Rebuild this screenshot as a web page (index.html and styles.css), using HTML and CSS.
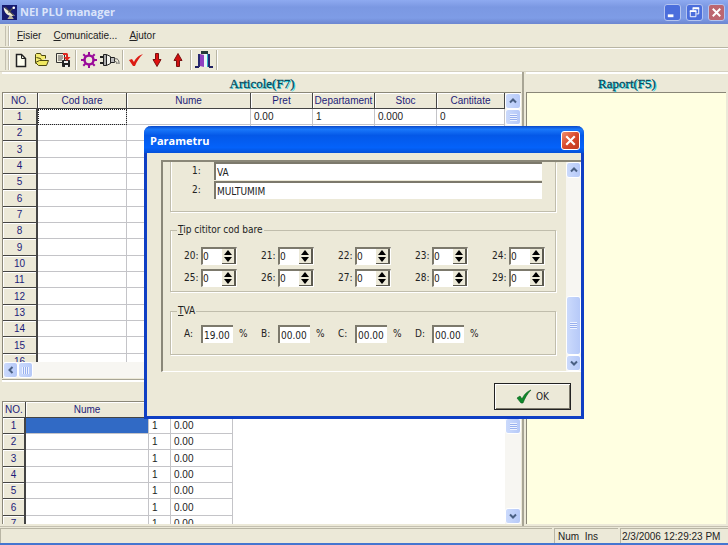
FILE: index.html
```html
<!DOCTYPE html>
<html lang="ro">
<head>
<meta charset="utf-8">
<title>NEI PLU manager</title>
<link rel="stylesheet" href="styles.css">
</head>
<body>
<div class="window">
  <header class="titlebar">
    <svg class="app-icon" viewBox="0 0 14 14" aria-hidden="true">
      <rect width="14" height="14" fill="#161a70"/>
      <path d="M1.500 2C2 8 6 11 12 10Z" fill="#f0ecd8"/>
      <path d="M3 2l8 8M6 7l5-5" stroke="#55534a" fill="none"/>
      <path d="M7 10l-2 3h6l-2-3" fill="#b8b49c"/>
      <circle cx="11" cy="2.500" r="1.200" fill="#fff"/>
    </svg>
    <h1 class="title">NEI PLU manager</h1>
    <button class="win-btn" aria-label="Minimize"><svg viewBox="0 0 16 16"><path d="M3 11.500h6" stroke="#fff" stroke-width="3"/></svg></button>
    <button class="win-btn" aria-label="Restore"><svg viewBox="0 0 16 16"><path d="M6.500 6V3.500H12.500V9.500H10M3.500 6.500H9.500V12.500H3.500Z" fill="none" stroke="#fff"/><path d="M6 3.500h7M3 6.500h7" stroke="#fff" stroke-width="2"/></svg></button>
    <button class="win-btn win-close" aria-label="Close"><svg viewBox="0 0 16 16"><path d="M4 4l8 8M12 4l-8 8" stroke="#fff" stroke-width="2"/></svg></button>
  </header>

  <nav class="menubar">
    <span class="grip"></span>
    <button class="menu"><u>F</u>isier</button>
    <button class="menu"><u>C</u>omunicatie...</button>
    <button class="menu"><u>A</u>jutor</button>
  </nav>

  <div class="toolbar" role="toolbar">
    <span class="grip"></span>
    <button class="tool" aria-label="New"><svg viewBox="0 0 16 16"><path d="M3.500 2.500h5l4 4v8h-9z" fill="#fffff0" stroke="#222" stroke-width="1.500"/><path d="M8.500 2.500v4h4" fill="none" stroke="#222"/></svg></button>
    <button class="tool" aria-label="Open"><svg viewBox="0 0 16 16"><path d="M1.500 11.500v-9l1-1h4l1 2h4v3" fill="#f4ec70" stroke="#4a4610"/><path d="M2.500 5.500l4 1 1 2h6" fill="none" stroke="#4a4610"/><path d="M1.500 10.500l4-2 9 0-2 5h-8z" fill="#f0e860" stroke="#4a4610"/></svg></button>
    <button class="tool" aria-label="Save"><svg viewBox="0 0 16 16"><path d="M1.500 1.500h8v9h-8z" fill="#f3efe0" stroke="#333"/><path d="M3 4h5M3 6h5M3 8h4" stroke="#555"/><path d="M7.500 8.500h7v6h-7z" fill="#222" stroke="#222"/><path d="M9 9h4v2H9zM10 13h3v2h-3z" fill="#eee"/><path d="M8 1h4l1 1v3h2.500L12 9 8.500 5H11V3H8z" fill="#e02820"/></svg></button>
    <span class="sep"></span>
    <button class="tool" aria-label="Settings"><svg viewBox="0 0 16 16"><circle cx="8" cy="8" r="4.500" fill="none" stroke="#9a0a9a" stroke-width="2.500"/><path d="M8 0v3M8 13v3M0 8h3M13 8h3M2.300 2.300l2 2M11.700 11.700l2 2M13.700 2.300l-2 2M4.300 11.700l-2 2" stroke="#9a0a9a" stroke-width="2"/></svg></button>
    <button class="tool" aria-label="Connect"><svg class="wide" viewBox="0 0 20 16"><path d="M0 5h3M0 11h3" stroke="#222" stroke-width="2"/><path d="M3.500 2.500h3v11h-3z" fill="#aaa" stroke="#222"/><path d="M6.500 2.500l4 2v7l-4 2z" fill="#f4f4ee" stroke="#222"/><path d="M10.500 5.500h4v5h-4z" fill="#bbb" stroke="#222"/><path d="M14 7c4-1 5 1 5 5M14 9.500c2 0 3 0 3 2.500" fill="none" stroke="#555"/></svg></button>
    <span class="sep"></span>
    <button class="tool" aria-label="Check"><svg viewBox="0 0 16 16"><path d="M1 8l3-1 2 3c2-4 4-6 9-8-4 4-6 7-8 12H5z" fill="#dc1c14"/></svg></button>
    <button class="tool" aria-label="Receive"><svg viewBox="0 0 16 16"><path d="M6.500 1.500h3v6h2.500l-4 7-4-7h2.500z" fill="#e01010" stroke="#7a1010"/></svg></button>
    <button class="tool" aria-label="Send"><svg viewBox="0 0 16 16"><path d="M6.500 14.500h3v-6h2.500l-4-7-4 7h2.500z" fill="#d01010" stroke="#7a1010"/></svg></button>
    <span class="sep"></span>
    <button class="tool tool-exit" aria-label="Exit"><svg viewBox="0 0 18 18"><path d="M0 16h4M14 16h4" stroke="#202060" stroke-width="2"/><path d="M9 3h3v13H9z" fill="#e8f6f8"/><path d="M3 3h2v13H3z" fill="#282870"/><path d="M5 3l4 1v12l-4-1z" fill="#9040c0"/><path d="M12 3h1v13h-1z" fill="#30b0c8"/><path d="M13 3h2v13h-2z" fill="#282870"/><path d="M6 1.500h7" stroke="#243838" stroke-width="3"/></svg></button>
    <span class="sep"></span>
  </div>

  <main class="workspace">
    <div class="left">
      <section class="pane articles">
        <h2 class="heading">Articole(F7)</h2>
        <div class="grid-frame">
          <div class="grid-clip">
            <table class="grid">
              <colgroup><col class="c-no"><col class="c-code"><col><col class="c-num"><col class="c-num"><col class="c-num"><col class="c-qty"></colgroup>
              <thead><tr><th>NO.</th><th>Cod bare</th><th>Nume</th><th>Pret</th><th>Departament</th><th>Stoc</th><th>Cantitate</th></tr></thead>
              <tbody>
                <tr><th>1</th><td class="focused"></td><td></td><td>0.00</td><td>1</td><td>0.000</td><td>0</td></tr>
                <tr><th>2</th><td></td><td></td><td></td><td></td><td></td><td></td></tr>
                <tr><th>3</th><td></td><td></td><td></td><td></td><td></td><td></td></tr>
                <tr><th>4</th><td></td><td></td><td></td><td></td><td></td><td></td></tr>
                <tr><th>5</th><td></td><td></td><td></td><td></td><td></td><td></td></tr>
                <tr><th>6</th><td></td><td></td><td></td><td></td><td></td><td></td></tr>
                <tr><th>7</th><td></td><td></td><td></td><td></td><td></td><td></td></tr>
                <tr><th>8</th><td></td><td></td><td></td><td></td><td></td><td></td></tr>
                <tr><th>9</th><td></td><td></td><td></td><td></td><td></td><td></td></tr>
                <tr><th>10</th><td></td><td></td><td></td><td></td><td></td><td></td></tr>
                <tr><th>11</th><td></td><td></td><td></td><td></td><td></td><td></td></tr>
                <tr><th>12</th><td></td><td></td><td></td><td></td><td></td><td></td></tr>
                <tr><th>13</th><td></td><td></td><td></td><td></td><td></td><td></td></tr>
                <tr><th>14</th><td></td><td></td><td></td><td></td><td></td><td></td></tr>
                <tr><th>15</th><td></td><td></td><td></td><td></td><td></td><td></td></tr>
                <tr><th>16</th><td></td><td></td><td></td><td></td><td></td><td></td></tr>
              </tbody>
            </table>
          </div>
          <div class="vscroll">
            <span class="sb"><svg viewBox="0 0 8 8"><path d="M1 5.500l3-3 3 3" /></svg></span>
            <span class="sb grips"></span>
            <span class="track"></span>
            <span class="sb"><svg viewBox="0 0 8 8"><path d="M1 2.500l3 3 3-3" /></svg></span>
          </div>
          <div class="hscroll">
            <span class="sb"><svg viewBox="0 0 8 8"><path d="M5.500 1l-3 3 3 3" /></svg></span>
            <span class="sb grips grips-v"></span>
          </div>
        </div>
      </section>

      <section class="pane departments">
        <div class="grid-frame">
          <div class="grid-clip">
            <table class="grid grid-small">
              <colgroup><col class="d-no"><col class="d-name"><col class="d-flag"><col class="d-value"></colgroup>
              <thead><tr><th>NO.</th><th>Nume</th><th></th><th></th></tr></thead>
              <tbody>
                <tr><th>1</th><td class="selected"></td><td>1</td><td>0.00</td></tr>
                <tr><th>2</th><td></td><td>1</td><td>0.00</td></tr>
                <tr><th>3</th><td></td><td>1</td><td>0.00</td></tr>
                <tr><th>4</th><td></td><td>1</td><td>0.00</td></tr>
                <tr><th>5</th><td></td><td>1</td><td>0.00</td></tr>
                <tr><th>6</th><td></td><td>1</td><td>0.00</td></tr>
                <tr><th>7</th><td></td><td>1</td><td>0.00</td></tr>
              </tbody>
            </table>
          </div>
          <div class="vscroll">
            <span class="sb"><svg viewBox="0 0 8 8"><path d="M1 5.500l3-3 3 3" /></svg></span>
            <span class="sb grips"></span>
            <span class="track"></span>
            <span class="sb"><svg viewBox="0 0 8 8"><path d="M1 2.500l3 3 3-3" /></svg></span>
          </div>
        </div>
      </section>
    </div>

    <section class="pane report">
      <h2 class="heading">Raport(F5)</h2>
      <div class="report-page"></div>
    </section>
  </main>

  <footer class="statusbar">
    <span class="status-main"></span>
    <span class="status-keys">Num&nbsp; Ins</span>
    <span class="status-time">2/3/2006 12:29:23 PM</span>
  </footer>
</div>

<div class="overlay">
  <div class="dialog" role="dialog" aria-labelledby="dlg-title">
    <header class="dialog-title">
      <h2 class="title" id="dlg-title">Parametru</h2>
      <button class="dialog-close" aria-label="Close"><svg viewBox="0 0 16 16"><path d="M4 4l8 8M12 4l-8 8" stroke="#fff" stroke-width="2"/></svg></button>
    </header>
    <div class="scroll-area">
      <form class="params">
        <div class="group group-lines">
          <label class="line"><span>1:</span><input class="field" type="text" value="VA"></label>
          <label class="line"><span>2:</span><input class="field" type="text" value="MULTUMIM" id="line2" autofocus></label>
        </div>
        <fieldset class="group group-reader">
          <legend><u>T</u>ip cititor cod bare</legend>
          <div class="cells" id="reader"></div>
        </fieldset>
        <fieldset class="group group-vat">
          <legend><u>T</u>VA</legend>
          <div class="cells">
            <label class="cell"><span>A:</span><input class="field rate" type="text" value="19.00">%</label>
            <label class="cell"><span>B:</span><input class="field rate" type="text" value="00.00">%</label>
            <label class="cell"><span>C:</span><input class="field rate" type="text" value="00.00">%</label>
            <label class="cell"><span>D:</span><input class="field rate" type="text" value="00.00">%</label>
          </div>
        </fieldset>
      </form>
      <div class="vscroll">
        <span class="sb"><svg viewBox="0 0 8 8"><path d="M1 5.500l3-3 3 3" /></svg></span>
        <span class="track"></span>
        <span class="sb grips thumb"></span>
        <span class="sb"><svg viewBox="0 0 8 8"><path d="M1 2.500l3 3 3-3" /></svg></span>
      </div>
    </div>
    <div class="actions">
      <button class="ok"><svg viewBox="0 0 16 16" aria-hidden="true"><path d="M1 9l3-2 2 3c2-4 4-7 9-9-4 4-6 8-8 13H5z" fill="#0f8a2a" stroke="#0a5a1c" stroke-width=".6"/></svg>OK</button>
    </div>
  </div>
</div>
<script src="script.js"></script>
</body>
</html>
```
FILE: styles.css
```css
* { box-sizing: border-box; }

body {
  margin: 0;
  font: 10px/12px "Liberation Sans", sans-serif;
  color: #222;
  background: #ece9d8;
}

button { font: inherit; color: inherit; padding: 0; border: 0; background: none; }
h1, h2 { margin: 0; }
svg { display: block; }

.window {
  display: flex;
  flex-direction: column;
  height: 100vh;
  overflow: hidden;
  border-bottom: 2px solid #4476d0;
}

.title { flex: 1; font: bold 11px/16px "Open Sans", sans-serif; }

/* title bar */
.titlebar {
  display: flex;
  align-items: center;
  gap: 5px;
  height: 24px;
  padding: 0 3px 0 2px;
  background: linear-gradient(#8eaaf0, #7b98e2 30%, #7e9ce6 75%, #6c86d0);
}
.titlebar .title { color: #dbe4fa; }
.app-icon { width: 15px; height: 15px; margin-right: -2px; }
.win-btn {
  width: 17px;
  height: 17px;
  border: 1px solid #b4c4f0;
  border-radius: 3px;
  background: #4b6edc;
}
.win-close { background: #bc6670; }

/* menu and tool bars */
.menubar, .toolbar {
  display: flex;
  align-items: center;
  height: 24px;
  padding-left: 5px;
  border-bottom: 1px solid #b8b5a4;
}
.toolbar { border-top: 1px solid #fff; border-bottom-color: #d4d0c0; }
.grip {
  width: 4px;
  height: 20px;
  border: solid #c4c0b0;
  border-width: 0 1px;
  box-shadow: 1px 0 #fff;
}
.menu { margin-left: 8px; margin-right: 4px; }
.tool { display: grid; place-items: center; width: 21px; height: 20px; }
.tool svg { width: 16px; height: 16px; overflow: visible; }
.tool svg.wide { width: 20px; }
.tool-exit svg { width: 18px; height: 18px; }
.grip + .tool { margin-left: 1px; }
.sep { width: 1px; height: 20px; margin: 0 2px; background: #b8b5a4; box-shadow: 1px 0 #fff; }

/* workspace */
.workspace {
  flex: 1;
  min-height: 0;
  display: grid;
  grid-template-columns: minmax(0, 1fr) 202px;
  gap: 2px;
  padding-left: 2px;
}
.left {
  display: grid;
  grid-template-rows: minmax(0, 308fr) minmax(0, 146fr);
  min-height: 0;
  border-right: 2px solid #a8a595;
}
.pane { display: flex; flex-direction: column; min-height: 0; border-top: 2px solid #fff; }
.heading {
  height: 18px;
  font: 13px/20px "Liberation Serif", serif;
  text-align: center;
  color: #064a5c;
  -webkit-text-stroke: 0.3px #064a5c;
  text-shadow: 1px 1px #2ee0ea;
}
.departments { padding: 19px 0 2px; }
.articles { border-bottom: 1px solid #a8a595; }
.articles .grid-frame { margin-bottom: 1px; }

.grid-frame {
  flex: 1;
  min-height: 0;
  display: grid;
  grid-template-columns: minmax(0, 1fr) 16px;
  grid-template-rows: minmax(0, 1fr) auto;
  margin-right: 1px;
  border-top: 1px solid #8a8778;
  border-left: 1px solid #8a8778;
  background: #fff;
}
.grid-clip { overflow: hidden; }
.grid { width: 100%; table-layout: fixed; border-collapse: separate; border-spacing: 0; }
.grid th, .grid td { height: 16px; padding: 1px 3px 0; line-height: 14px; white-space: nowrap; }
.grid tr:nth-child(3n) > * { height: 17px; }
.grid td { border-right: 1px solid #c4c4c8; border-bottom: 1px solid #c4c4c8; }
.grid th {
  padding: 1px 0 0;
  font-weight: normal;
  color: #1c1c78;
  background: #ece9d8;
  border-right: 1px solid #444;
  border-bottom: 1px solid #444;
  box-shadow: inset 1px 1px #fff;
}
.grid tbody th { border-right-width: 2px; }
.grid .focused { outline: 1px dotted #222; outline-offset: -1px; }
.grid .selected { background: #316ac5; }
.grid-small { width: 230px; }
.c-no { width: 35px; }
.c-code { width: 89px; }
.c-num { width: 62px; }
.c-qty { width: 68px; }
.d-no { width: 23px; }
.d-name { width: 123px; }
.d-flag { width: 22px; }
.d-value { width: 62px; }

.report-page { flex: 1; border: solid #8a8778; border-width: 1px 0 0 1px; background: #ffffe1; margin: 0 2px 2px 0; }

/* scroll bars */
.vscroll { display: flex; flex-direction: column; background: #f7f6f2; }
.hscroll { grid-column: 1 / -1; display: flex; height: 16px; background: #f7f6f2; }
.track { flex: 1; }
.sb {
  display: grid;
  place-items: center;
  min-width: 15px;
  height: 16px;
  border: 1px solid #fff;
  border-radius: 3px;
  background: linear-gradient(90deg, #cbdafc, #b6c9f8);
}
.sb svg { width: 8px; height: 8px; }
.sb path { fill: none; stroke: #4a6084; stroke-width: 2; }
.grips::before {
  content: "";
  width: 7px;
  height: 7px;
  background: repeating-linear-gradient(#eef3ff 0 1px, #98b0ee 1px 2px);
}
.grips-v::before { background: repeating-linear-gradient(90deg, #eef3ff 0 1px, #98b0ee 1px 2px); }
.thumb { height: 59px; }

/* status bar */
.statusbar {
  display: flex;
  gap: 2px;
  height: 17px;
  padding-top: 1px;
  line-height: 15px;
  border-top: 1px solid #c4c0b0;
}
.statusbar span { border: solid #b8b5a4; border-width: 1px 0 0 1px; padding-left: 3px; }
.status-main { flex: 1; }
.status-keys { width: 64px; }
.status-time { width: 108px; }
.statusbar .status-time { padding-left: 1px; }

/* dialog */
.overlay {
  position: absolute;
  inset: 0;
  display: flex;
  align-items: center;
  justify-content: center;
}
.dialog {
  width: 440px;
  border: 3px solid #0f3fc4;
  border-top: 0;
  border-radius: 7px 7px 0 0;
  font-family: "DejaVu Sans Condensed", "DejaVu Sans", sans-serif;
  background: #ece9d8;
}
.dialog-title {
  display: flex;
  align-items: center;
  height: 27px;
  margin: 0 -3px;
  padding: 2px 4px 0 6px;
  border-radius: 7px 7px 0 0;
  background: linear-gradient(#0a48c8, #1a78fa 12%, #0458e8 35%, #0462fa 80%, #0450d8);
  color: #fff;
}
.dialog-close {
  width: 19px;
  height: 19px;
  border: 1px solid #fff;
  border-radius: 3px;
  background: linear-gradient(135deg, #f09070, #d8482a 50%, #c03a20);
}
.scroll-area {
  display: flex;
  margin: 7px 0 0 14px;
  border: solid #8a8778;
  border-width: 2px 0 0 2px;
  border-bottom: 1px solid #fff;
}
.scroll-area .vscroll { width: 15px; }
.params { flex: 1; min-width: 0; padding: 0 10px 16px 7px; }
.group {
  min-width: 0;
  margin: 0;
  padding: 0 13px;
  border: 1px solid #c0bdac;
  box-shadow: inset 1px 0 #fff, 1px 1px #fff;
}
.group-lines { display: flex; flex-direction: column; gap: 1px; height: 50px; border-top: 0; }
.group-reader { height: 68px; margin-top: 12px; }
.group-vat { height: 50px; margin-top: 13px; }
legend { margin-left: -7px; padding: 0 1px; height: 12px; }
.line { display: flex; align-items: center; padding-left: 8px; }
.line span { width: 22px; }
.line .field { flex: 1; }
.field {
  min-width: 0;
  height: 18px;
  padding: 0 0 0 1px;
  border: solid #7c796c;
  border-width: 2px 0 0 2px;
  outline: 0;
  background: #fff;
  font: inherit;
  color: #222;
}
.cells { display: grid; grid-template-columns: repeat(5, 77px); row-gap: 4px; padding-top: 11px; }
.group-vat .cells { padding-top: 8px; }
.cell { display: flex; align-items: center; height: 18px; }
.cell > :first-child { width: 17px; white-space: nowrap; }
.rate { width: 32px; margin-right: 6px; }
.spin { display: flex; width: 36px; height: 18px; border: solid #7c796c; border-width: 2px 1px 1px 2px; border-right-color: #fff; border-bottom-color: #fff; background: #fff; }
.spin .field { flex: 1; width: 0; height: 15px; border: 0; padding: 0; }
.steps { display: flex; flex-direction: column; width: 14px; border: solid #5c5a50; border-width: 0 2px 1px 0; background: #ece9d8; }
.steps button { flex: 1; display: grid; place-items: center; }
.steps svg { width: 8px; height: 5px; }
.actions { display: flex; justify-content: flex-end; padding: 11px 10px 6px; }
.ok {
  display: flex;
  align-items: center;
  justify-content: center;
  gap: 4px;
  width: 77px;
  height: 27px;
  border: 1px solid #222;
  box-shadow: inset 1px 1px #fff, inset -1px -1px #7c796c;
}
.ok svg { width: 16px; height: 16px; }
```
FILE: script.js
```js
// Build the ten bar code reader spinners, numbered 20 to 29.
const reader = document.getElementById("reader");
for (let n = 20; n < 30; n++) {
  const cell = document.createElement("div");
  cell.className = "cell";
  cell.innerHTML = `
    <label for="r${n}">${n}:</label>
    <div class="spin">
      <input class="field" id="r${n}" type="text" value="0">
      <div class="steps">
        <button type="button" aria-label="Up"><svg viewBox="0 0 8 5"><path d="M4 0l4 5H0z"/></svg></button>
        <button type="button" aria-label="Down"><svg viewBox="0 0 8 5"><path d="M4 5l4-5H0z"/></svg></button>
      </div>
    </div>`;
  reader.append(cell);
}

// Put the caret at the end of the line being edited.
const line2 = document.getElementById("line2");
line2.focus();
line2.setSelectionRange(line2.value.length, line2.value.length);
```
